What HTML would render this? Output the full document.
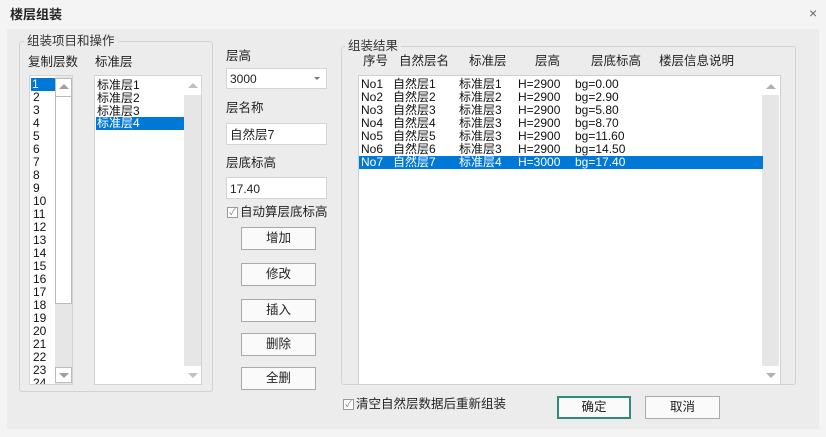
<!DOCTYPE html>
<html><head><meta charset="utf-8"><style>
*{margin:0;padding:0;box-sizing:border-box}
body{width:826px;height:437px;background:#f4f4f4;font-family:"Liberation Sans","Microsoft YaHei","Noto Sans CJK SC",sans-serif;font-size:12px;color:#222;position:relative;overflow:hidden}
.a{position:absolute}
.t{position:absolute;white-space:nowrap;line-height:14px}
.panel{left:7px;top:29px;width:812px;height:400px;background:#ececec}
.grp{border:1px solid #d2d2d2;border-radius:3px}
.lbl{background:#ececec;padding:0 3px;color:#333;font-size:12.5px}
.box{background:#fff;border:1px solid #d4d4d4}
.btn{position:absolute;background:#fafafa;border:1px solid #a9a9a9;text-align:center;line-height:20px;font-size:12.5px;color:#222}
.up{width:0;height:0;border-left:5px solid transparent;border-right:5px solid transparent;border-bottom:5px solid #a0a0a0;position:absolute}
.dn{width:0;height:0;border-left:5px solid transparent;border-right:5px solid transparent;border-top:5px solid #a0a0a0;position:absolute}
.row{position:absolute;height:13px;line-height:13px;font-size:12px;color:#111}
.sel{background:#0078d7;color:#fff}
.cb{position:absolute;width:11px;height:11px;border:1px solid #999;background:#fff;font-size:9px;line-height:9px;color:#777;text-align:center}
</style></head><body>
<div class="t" style="left:10px;top:8px;font-weight:bold;font-size:13px;color:#222">楼层组装</div>
<div class="t" style="left:809px;top:6px;font-size:14px;color:#666">×</div>
<div class="a panel"></div>

<!-- left group -->
<div class="a grp" style="left:19px;top:41px;width:194px;height:351px"></div>
<div class="t lbl" style="left:24px;top:34px">组装项目和操作</div>
<div class="t" style="left:28px;top:55px;font-size:12.5px">复制层数</div>
<div class="t" style="left:95px;top:55px;font-size:12.5px">标准层</div>
<div class="a box" style="left:29px;top:75px;width:44px;height:310px;overflow:hidden">
 <div class="row sel" style="left:1px;top:2px;width:24px;padding-left:1px">1</div>
 <div style="position:absolute;left:3px;top:15px;line-height:13px;font-size:12px;color:#111">2<br>3<br>4<br>5<br>6<br>7<br>8<br>9<br>10<br>11<br>12<br>13<br>14<br>15<br>16<br>17<br>18<br>19<br>20<br>21<br>22<br>23<br>24</div>
 <div class="a" style="left:25px;top:0;width:17px;height:308px;background:#e6e6e6"></div>
 <div class="a" style="left:25px;top:2px;width:17px;height:226px;background:#fff;border:1px solid #bbb"></div>
 <div class="a" style="left:25px;top:20px;width:17px;height:1px;background:#bbb"></div>
 <div class="up" style="left:29px;top:8px"></div>
 <div class="a" style="left:25px;top:291px;width:17px;height:16px;background:#fff;border:1px solid #bbb"></div>
 <div class="dn" style="left:29px;top:297px"></div>
</div>
<div class="a box" style="left:94px;top:75px;width:108px;height:310px">
 <div class="row" style="left:2px;top:3px">标准层1</div>
 <div class="row" style="left:2px;top:16px">标准层2</div>
 <div class="row" style="left:2px;top:29px">标准层3</div>
 <div class="row sel" style="left:1px;top:41px;width:88px;padding-left:1px">标准层4</div>
 <div class="a" style="left:89px;top:1px;width:17px;height:306px;background:#e6e6e6"></div>
 <div class="a" style="left:89px;top:1px;width:17px;height:18px;background:#fff"></div>
 <div class="up" style="left:93px;top:7px;border-bottom-color:#c0c0c0"></div>
 <div class="a" style="left:89px;top:290px;width:17px;height:17px;background:#fff"></div>
 <div class="dn" style="left:93px;top:297px;border-top-color:#c0c0c0"></div>
</div>

<!-- middle -->
<div class="t" style="left:226px;top:49px;font-size:12.5px">层高</div>
<div class="a box" style="left:226px;top:68px;width:101px;height:21px"><span class="t" style="left:3px;top:3px">3000</span><div class="dn" style="left:87px;top:8px;border-left-width:3px;border-right-width:3px;border-top-width:3px;border-top-color:#777"></div></div>
<div class="t" style="left:226px;top:101px;font-size:12.5px">层名称</div>
<div class="a box" style="left:226px;top:123px;width:101px;height:22px"><span class="t" style="left:3px;top:4px;font-size:12.5px">自然层7</span></div>
<div class="t" style="left:226px;top:156px;font-size:12.5px">层底标高</div>
<div class="a box" style="left:226px;top:177px;width:101px;height:22px"><span class="t" style="left:3px;top:4px">17.40</span></div>
<div class="cb" style="left:227px;top:207px">✓</div>
<div class="t" style="left:240px;top:205px;font-size:12.5px">自动算层底标高</div>
<div class="btn" style="left:241px;top:227px;width:75px;height:23px">增加</div>
<div class="btn" style="left:241px;top:263px;width:75px;height:23px">修改</div>
<div class="btn" style="left:241px;top:299px;width:75px;height:23px">插入</div>
<div class="btn" style="left:241px;top:333px;width:75px;height:23px">删除</div>
<div class="btn" style="left:241px;top:367px;width:75px;height:23px">全删</div>

<!-- right group -->
<div class="a grp" style="left:341px;top:46px;width:455px;height:339px"></div>
<div class="t lbl" style="left:345px;top:39px">组装结果</div>
<div class="t" style="left:363px;top:54px;font-size:12.5px">序号</div>
<div class="t" style="left:399px;top:54px;font-size:12.5px">自然层名</div>
<div class="t" style="left:469px;top:54px;font-size:12.5px">标准层</div>
<div class="t" style="left:535px;top:54px;font-size:12.5px">层高</div>
<div class="t" style="left:591px;top:54px;font-size:12.5px">层底标高</div>
<div class="t" style="left:659px;top:54px;font-size:12.5px">楼层信息说明</div>
<div class="a box" style="left:358px;top:75px;width:423px;height:310px;border-color:#d0d0d0">
 <div class="a" style="left:403px;top:1px;width:17px;height:306px;background:#e6e6e6"></div>
 <div class="a" style="left:403px;top:1px;width:17px;height:18px;background:#fff"></div>
 <div class="up" style="left:407px;top:8px;border-bottom-color:#b0b0b0"></div>
 <div class="a" style="left:403px;top:290px;width:17px;height:17px;background:#fff"></div>
 <div class="dn" style="left:407px;top:297px;border-top-color:#b0b0b0"></div>
</div>
<div class="a" style="left:359px;top:78px;width:404px;font-size:12px">
 <div class="row" style="left:0;top:0;width:404px"><span class="a" style="left:2px">No1</span><span class="a" style="left:34px">自然层1</span><span class="a" style="left:100px">标准层1</span><span class="a" style="left:159px">H=2900</span><span class="a" style="left:216px">bg=0.00</span></div>
 <div class="row" style="left:0;top:13px;width:404px"><span class="a" style="left:2px">No2</span><span class="a" style="left:34px">自然层2</span><span class="a" style="left:100px">标准层2</span><span class="a" style="left:159px">H=2900</span><span class="a" style="left:216px">bg=2.90</span></div>
 <div class="row" style="left:0;top:26px;width:404px"><span class="a" style="left:2px">No3</span><span class="a" style="left:34px">自然层3</span><span class="a" style="left:100px">标准层3</span><span class="a" style="left:159px">H=2900</span><span class="a" style="left:216px">bg=5.80</span></div>
 <div class="row" style="left:0;top:39px;width:404px"><span class="a" style="left:2px">No4</span><span class="a" style="left:34px">自然层4</span><span class="a" style="left:100px">标准层3</span><span class="a" style="left:159px">H=2900</span><span class="a" style="left:216px">bg=8.70</span></div>
 <div class="row" style="left:0;top:52px;width:404px"><span class="a" style="left:2px">No5</span><span class="a" style="left:34px">自然层5</span><span class="a" style="left:100px">标准层3</span><span class="a" style="left:159px">H=2900</span><span class="a" style="left:216px">bg=11.60</span></div>
 <div class="row" style="left:0;top:65px;width:404px"><span class="a" style="left:2px">No6</span><span class="a" style="left:34px">自然层6</span><span class="a" style="left:100px">标准层3</span><span class="a" style="left:159px">H=2900</span><span class="a" style="left:216px">bg=14.50</span></div>
 <div class="row sel" style="left:0;top:78px;width:404px"><span class="a" style="left:2px">No7</span><span class="a" style="left:34px">自然层7</span><span class="a" style="left:100px">标准层4</span><span class="a" style="left:159px">H=3000</span><span class="a" style="left:216px">bg=17.40</span></div>
</div>

<!-- bottom -->
<div class="cb" style="left:343px;top:399px">✓</div>
<div class="t" style="left:356px;top:397px;font-size:12.5px">清空自然层数据后重新组装</div>
<div class="btn" style="left:557px;top:396px;width:74px;height:23px;border:2px solid #2e8b7a;line-height:19px">确定</div>
<div class="btn" style="left:645px;top:396px;width:75px;height:23px">取消</div>
</body></html>
